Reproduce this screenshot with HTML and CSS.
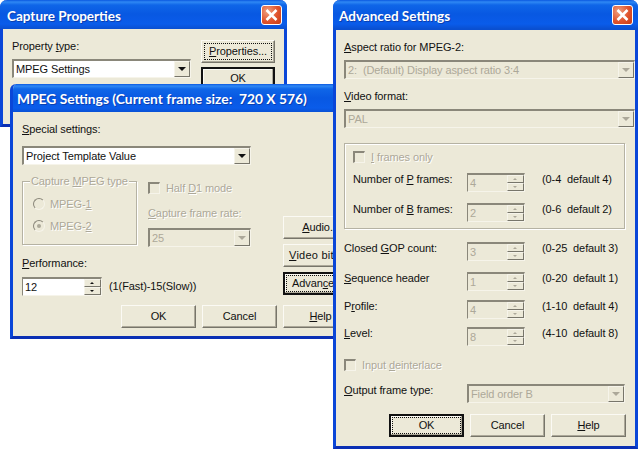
FILE: index.html
```html
<!DOCTYPE html>
<html lang="en">
<head>
<meta charset="utf-8">
<title>Capture Properties</title>
<link rel="stylesheet" href="styles.css">
</head>
<body>
<svg class="defs" width="0" height="0" aria-hidden="true">
  <symbol id="x" viewBox="0 0 21 20">
    <path d="M5.5 5 L15.5 15 M15.5 5 L5.5 15" stroke="#fff" stroke-width="2.6" fill="none"/>
  </symbol>
</svg>

<section class="win win-capture">
  <header class="title"><span class="title-text">Capture Properties</span>
    <span class="close"><svg width="21" height="20"><use href="#x"/></svg></span></header>
  <div class="body body-capture">
    <div class="cap-left">
      <div class="lbl">Property <u>t</u>ype:</div>
      <div class="combo cap-combo"><span class="val">MPEG Settings</span><span class="drop"></span></div>
    </div>
    <div class="cap-right">
      <div class="btn focus"><span><u>P</u>roperties...</span></div>
      <div class="btn default"><span>OK</span></div>
    </div>
  </div>
</section>

<section class="win win-mpeg">
  <header class="title"><span class="title-text">MPEG Settings (Current frame size:&nbsp; 720 X 576)</span></header>
  <div class="body body-mpeg">
    <div class="mpeg-main">
      <div class="mpeg-left">
        <div class="lbl"><u>S</u>pecial settings:</div>
        <div class="combo mt10"><span class="val">Project Template Value</span><span class="drop"></span></div>
        <div class="mpeg-mid">
          <div class="group group-capture">
            <span class="legend dis">Capture <u>M</u>PEG type</span>
            <div class="radio-row dis"><span class="radio"></span><span>MPEG-<u>1</u></span></div>
            <div class="radio-row dis"><span class="radio on"></span><span>MPEG-<u>2</u></span></div>
          </div>
          <div class="mid-col">
            <div class="check-row dis"><span class="check"></span><span>Half <u>D</u>1 mode</span></div>
            <div class="lbl dis mt13"><u>C</u>apture frame rate:</div>
            <div class="combo off mt8"><span class="val">25</span><span class="drop"></span></div>
          </div>
        </div>
        <div class="lbl mt10"><u>P</u>erformance:</div>
        <div class="perf">
          <div class="spin spin-perf"><span class="val">12</span><span class="spin-btns"><i class="up"></i><i class="dn"></i></span></div>
          <span class="perf-note">(1(Fast)-15(Slow))</span>
        </div>
      </div>
      <div class="mpeg-right">
        <div class="btn"><span><u>A</u>udio...</span></div>
        <div class="btn btn-video"><span><u>V</u>ideo bit rate...</span></div>
        <div class="btn default focus"><span>Advan<u>c</u>ed...</span></div>
      </div>
    </div>
    <div class="actions actions-mpeg">
      <div class="btn"><span>OK</span></div>
      <div class="btn"><span>Cancel</span></div>
      <div class="btn"><span><u>H</u>elp</span></div>
    </div>
  </div>
</section>

<section class="win win-adv">
  <header class="title"><span class="title-text">Advanced Settings</span>
    <span class="close"><svg width="21" height="20"><use href="#x"/></svg></span></header>
  <div class="body body-adv">
    <div class="lbl"><u>A</u>spect ratio for MPEG-2:</div>
    <div class="combo off mt6"><span class="val">2:&nbsp; (Default) Display aspect ratio 3:4</span><span class="drop"></span></div>
    <div class="lbl mt11"><u>V</u>ideo format:</div>
    <div class="combo off mt6"><span class="val">PAL</span><span class="drop"></span></div>

    <div class="group group-frames">
      <div class="check-row dis"><span class="check"></span><span><u>I</u> frames only</span></div>
      <div class="row row-p"><span>Number of <u>P</u> frames:</span>
        <div class="spin off"><span class="val">4</span><span class="spin-btns"><i class="up"></i><i class="dn"></i></span></div>
        <span>(0-4&nbsp; default 4)</span></div>
      <div class="row row-b"><span>Number of <u>B</u> frames:</span>
        <div class="spin off"><span class="val">2</span><span class="spin-btns"><i class="up"></i><i class="dn"></i></span></div>
        <span>(0-6&nbsp; default 2)</span></div>
    </div>

    <div class="row outer mt13"><span>Closed <u>G</u>OP count:</span>
      <div class="spin off"><span class="val">3</span><span class="spin-btns"><i class="up"></i><i class="dn"></i></span></div>
      <span>(0-25&nbsp; default 3)</span></div>
    <div class="row outer mt11"><span><u>S</u>equence header</span>
      <div class="spin off"><span class="val">1</span><span class="spin-btns"><i class="up"></i><i class="dn"></i></span></div>
      <span>(0-20&nbsp; default 1)</span></div>
    <div class="row outer mt9"><span>P<u>r</u>ofile:</span>
      <div class="spin off"><span class="val">4</span><span class="spin-btns"><i class="up"></i><i class="dn"></i></span></div>
      <span>(1-10&nbsp; default 4)</span></div>
    <div class="row outer mt8"><span><u>L</u>evel:</span>
      <div class="spin off"><span class="val">8</span><span class="spin-btns"><i class="up"></i><i class="dn"></i></span></div>
      <span>(4-10&nbsp; default 8)</span></div>

    <div class="check-row dis mt13">
      <span class="check"></span><span>Input <u>d</u>einterlace</span></div>
    <div class="row outer mt13"><span><u>O</u>utput frame type:</span>
      <div class="combo off output"><span class="val">Field order B</span><span class="drop"></span></div></div>
    <div class="actions actions-adv">
      <div class="btn default focus"><span>OK</span></div>
      <div class="btn"><span>Cancel</span></div>
      <div class="btn"><span><u>H</u>elp</span></div>
    </div>
  </div>
</section>
</body>
</html>
```
FILE: styles.css
```css
html, body { margin: 0; padding: 0; }
body {
  width: 639px; height: 451px; position: relative; overflow: hidden;
  background: #fff; color: #111;
  font: 11px/13px "Liberation Sans", Arial, sans-serif;
  letter-spacing: -0.1px;
}
.defs { position: absolute; }
u { text-decoration: underline; text-underline-offset: 1px; }

/* windows on the desktop */
.win {
  position: absolute; box-sizing: border-box;
  display: flex; flex-direction: column;
  border: 3px solid #0a46d8; border-top: 0;
  border-bottom-color: #0a2fb4;
  border-radius: 7px 7px 0 0;
  background: #ece9d8;
}
.win-capture { left: 0; top: 0; width: 287px; height: 127px; }
.win-mpeg { left: 10px; top: 84px; width: 324px; height: 255px; border-radius: 6px 0 0 0; border-right: 0; overflow: hidden; }
.win-adv { left: 333px; top: 0; width: 305px; height: 449px; }

.title {
  flex: none; height: 29px; margin: 0 -3px;
  display: flex; align-items: center; justify-content: space-between;
  padding: 2px 5px 0 7px; box-sizing: border-box;
  border-radius: 7px 7px 0 0;
  background: linear-gradient(#0a58e0 0, #2f88f4 2px, #0f66e8 5px, #0858e2 14px, #0a5cea 24px, #0a4fd0 29px);
  color: #fff; font: bold 13.5px/16px Lato, "Liberation Sans", sans-serif;
  text-shadow: 1px 1px 0 #0a3fb0; letter-spacing: 0;
}
.win-mpeg .title { height: 28px; margin-right: 0; padding-left: 7px; font-size: 13.8px; border-radius: 6px 0 0 0; }
.win-adv .title { height: 30px; padding-left: 6px; }
.close {
  flex: none; width: 21px; height: 20px; box-sizing: border-box; margin-top: -2px;
  display: block; border: 1px solid #fff; border-radius: 3px; overflow: hidden;
  background: radial-gradient(circle at 30% 30%, #f0a080, #e0532d 55%, #c83c14);
}
.close svg { display: block; margin: -1px; }

.body { flex: 1; min-height: 0; background: #ece9d8; }
.body-capture { display: flex; padding: 11px 0 0 9px; }
.body-mpeg { padding: 11px 0 0 9px; }
.body-adv { padding: 11px 0 0 8px; }

.mt6 { margin-top: 6px; }
.mt8 { margin-top: 8px; }
.mt9 { margin-top: 9px; }
.mt10 { margin-top: 10px; }
.mt11 { margin-top: 11px; }
.mt13 { margin-top: 13px; }

.lbl { height: 13px; white-space: nowrap; }
.dis { color: #aca899; text-shadow: 1px 1px 0 #fff; }

/* combo box */
.combo {
  box-sizing: border-box; height: 19px; width: 100%;
  display: flex; align-items: center; justify-content: space-between;
  background: #fff;
  border: 1px solid; border-color: #8a877a #f6f4ea #f6f4ea #8a877a;
  border-width: 2px 1px 1px 2px;
}
.combo .val { padding-left: 2px; white-space: nowrap; }
.combo.off { background: #ece9d8; color: #aca899; }
.drop {
  flex: none; width: 16px; height: 16px; box-sizing: border-box; position: relative;
  background: #ece9d8;
  border: 1px solid; border-color: #f6f4ea #77756a #77756a #f6f4ea;
}
.drop::after {
  content: ""; position: absolute; left: 3px; top: 5px;
  border: 4px solid transparent; border-top: 4px solid #111; border-bottom: 0;
}
.off .drop::after { border-top-color: #aca899; }

/* spin box */
.spin {
  box-sizing: border-box; height: 19px; width: 58px;
  display: flex; align-items: center; justify-content: space-between;
  background: #fff;
  border: 1px solid; border-color: #8a877a #f6f4ea #f6f4ea #8a877a;
  border-width: 2px 1px 1px 1px;
}
.spin .val { padding-left: 2px; }
.spin.off { background: #ece9d8; color: #aca899; }
.spin-btns { flex: none; width: 17px; height: 16px; display: flex; flex-direction: column; }
.spin-btns i {
  flex: 1; box-sizing: border-box; position: relative; display: block;
  background: #ece9d8;
  border: 1px solid; border-color: #f6f4ea #77756a #77756a #f6f4ea;
}
.spin-btns i::after {
  content: ""; position: absolute; left: 5px; top: 2px;
  border: 2px solid transparent;
}
.up::after { border-bottom-color: #111 !important; border-top: 0 !important; }
.dn::after { border-top-color: #111 !important; border-bottom: 0 !important; }
.off .up::after { border-bottom-color: #aca899 !important; }
.off .dn::after { border-top-color: #aca899 !important; }
.spin-perf { width: 80px; }

/* buttons */
.btn {
  box-sizing: border-box; width: 75px; height: 23px; padding: 2px;
  display: flex; background: #ece9d8;
  border: 1px solid; border-color: #fbfaf4 #77756a #77756a #fbfaf4;
  box-shadow: inset -1px -1px 0 #aca899;
  white-space: nowrap; overflow: hidden; flex: none;
}
.btn > span {
  flex: 1; border: 1px solid transparent; display: block; text-align: center; line-height: 15px;
}
.btn.default { border: 2px solid #111; padding: 1px; box-shadow: inset -1px -1px 0 #aca899, inset 1px 1px 0 #fbfaf4; }
.btn.focus > span { border: 1px dotted #111; }
.btn-video > span { text-align: left; padding-left: 2px; letter-spacing: 0.25px; }

/* capture window */
.cap-left { width: 179px; }
.cap-combo { margin-top: 6px; }
.cap-right { margin: 0 0 0 10px; display: flex; flex-direction: column; gap: 4px; }
.cap-right .btn { width: 74px; }

/* mpeg window */
.mpeg-main { display: flex; gap: 32px; }
.mpeg-left { width: 229px; flex: none; }
.mpeg-mid { display: flex; gap: 11px; margin-top: 16px; }
.mid-col { width: 103px; padding-top: 1px; }
.mpeg-right { display: flex; flex-direction: column; gap: 5px; padding-top: 93px; }
.perf { display: flex; align-items: center; gap: 7px; margin-top: 7px; }
.actions { display: flex; gap: 6px; }
.actions-mpeg { margin-top: 9px; padding-left: 99px; }
.actions-adv { margin-top: 11px; padding-left: 45px; }

/* groups */
.group {
  position: relative; box-sizing: border-box;
  border: 1px solid #b5b2a3;
  box-shadow: 1px 1px 0 #fff, inset 1px 1px 0 #fff;
}
.legend {
  position: absolute; left: 7px; top: -7px; padding: 0 1px;
  background: #ece9d8; white-space: nowrap;
}
.group-capture { width: 115px; height: 64px; padding: 16px 0 0 10px; }
.radio-row { display: flex; align-items: center; gap: 5px; height: 12px; margin-bottom: 10px; }
.radio {
  box-sizing: border-box; flex: none; width: 12px; height: 12px; border-radius: 50%;
  background: #ece9d8; position: relative;
  border: 1px solid; border-color: #8a877a #f6f4ea #f6f4ea #8a877a;
}
.radio.on::after {
  content: ""; position: absolute; left: 3px; top: 3px; width: 4px; height: 4px;
  border-radius: 50%; background: #aca899;
}
.check-row { display: flex; align-items: center; gap: 6px; height: 12px; white-space: nowrap; }
.check {
  box-sizing: border-box; flex: none; width: 12px; height: 12px;
  background: #ece9d8;
  border: 2px solid; border-color: #8a877a #f6f4ea #f6f4ea #8a877a;
  border-width: 2px 1px 1px 2px;
}
.group-frames { height: 86px; margin-top: 15px; width: 281px; padding: 7px 0 0 8px; }

/* rows of the advanced window */
.row {
  display: grid; grid-template-columns: 114px 58px 17px auto;
  white-space: nowrap;
}
.row > :nth-child(2) { grid-column: 2; }
.row > :nth-child(3) { grid-column: 4; }
.row-p { margin-top: 10px; }
.row-b { margin-top: 11px; }
.outer { grid-template-columns: 123px 58px 17px auto; }
.output { grid-column: 2 / 5 !important; width: 158px; }
```
